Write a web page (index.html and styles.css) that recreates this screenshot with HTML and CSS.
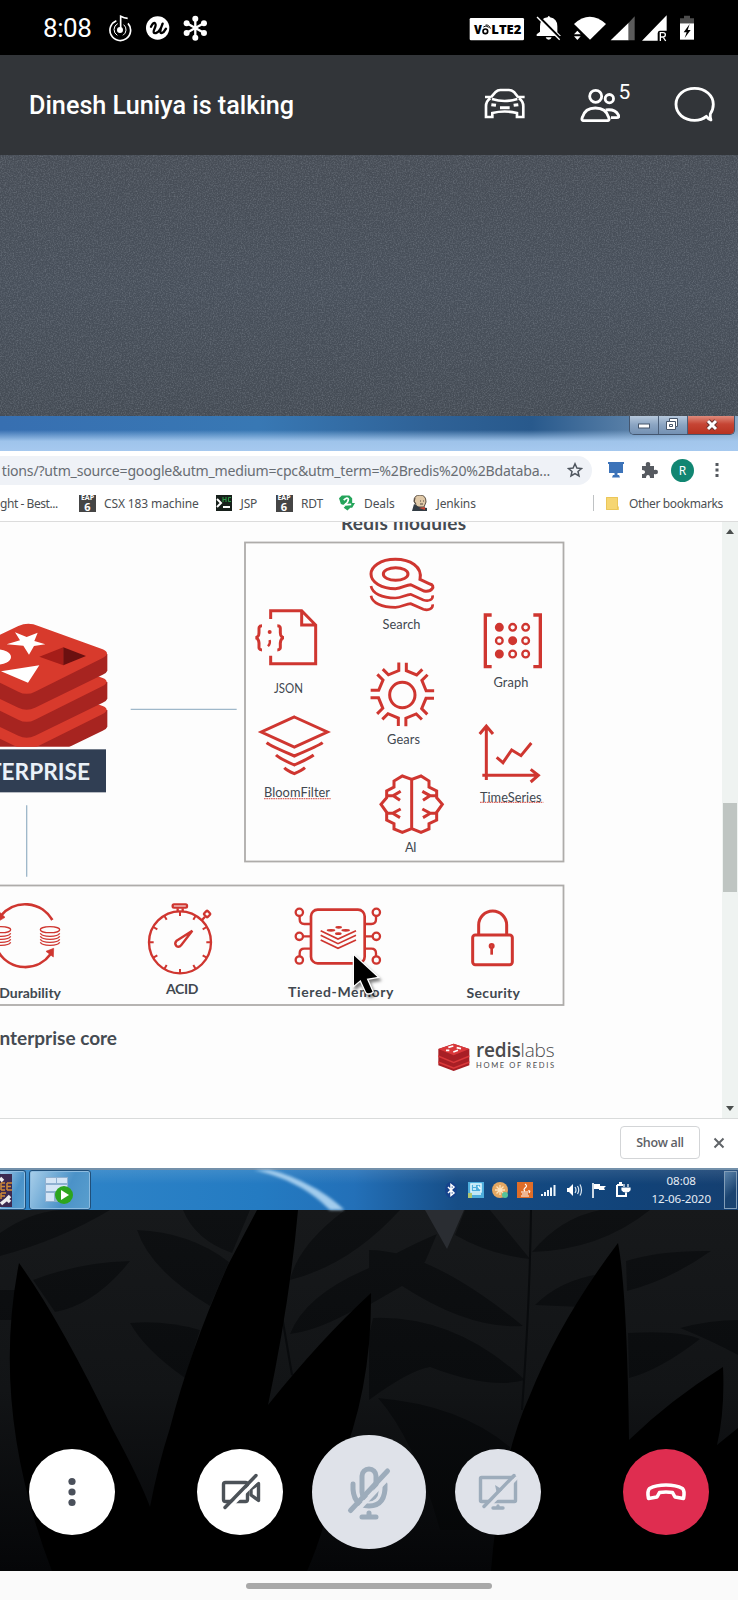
FILE: index.html
```html
<!DOCTYPE html>
<html lang="en">
<head>
<meta charset="utf-8">
<title>Video call</title>
<link rel="stylesheet" href="styles.css">
</head>
<body>
<main class="phone">
  <header class="status">
    <div class="status-left">
      <span class="clock">8:08</span>
      <svg class="status-apps" viewBox="320 40 304 84">
        <g fill="none" stroke="#fff" stroke-width="5">
          <path d="M348 60A31 31 0 1 0 383 68"/>
          <path d="M352 69A20 20 0 0 0 351 104M370 72A20 20 0 0 1 368 104" stroke-width="3"/>
          <path d="M361 88V47Q372 53 382 53"/>
        </g>
        <circle cx="359" cy="88" r="9" fill="#fff"/>
        <circle cx="472" cy="82" r="35" fill="#fff"/>
        <path d="M452 78Q460 62 465 69Q468 73 462 86Q456 99 467 97Q479 94 487 69Q474 100 485 97Q491 95 497 84" fill="none" stroke="#000" stroke-width="7" stroke-linecap="round" stroke-linejoin="round"/>
        <g stroke="#fff" stroke-width="7"><path d="M585 50V114M557 66L613 98M557 98L613 66"/></g>
        <g fill="#fff"><circle cx="585" cy="54" r="9"/><circle cx="585" cy="111" r="9"/><circle cx="559" cy="68" r="9"/><circle cx="611" cy="68" r="9"/><circle cx="559" cy="97" r="9"/><circle cx="611" cy="97" r="9"/></g>
      </svg>
    </div>
    <svg class="status-right" viewBox="300 40 680 84">
      <rect x="302" y="52" width="163" height="67" rx="4" fill="#fff"/>
      <g class="volte"><text x="315" y="99" textLength="24">V</text><text x="367" y="99" textLength="90" lengthAdjust="spacingAndGlyphs">LTE2</text></g>
      <circle cx="349" cy="92" r="7" fill="none" stroke="#000" stroke-width="5"/>
      <path d="M343 79Q351 72 359 80M350 73Q361 72 364 84" fill="none" stroke="#000" stroke-width="3"/>
      <path d="M503 106V101L513 93V77Q514 52 536 50Q539 42 543 50Q565 54 565 77V95L576 106Z" fill="#fff"/>
      <path d="M530 110H548Q546 117 539 117Q532 117 530 110" fill="#fff"/>
      <path d="M508 46L576 115" stroke="#000" stroke-width="7"/><path d="M504 49L572 117" stroke="#fff" stroke-width="4"/>
      <path d="M615 70Q662 27 711 70L663 117Z" fill="#fff"/>
      <path d="M625 90L635 101H615ZM625 118L635 107H615Z" fill="#fff"/>
      <path d="M725 119L779 66V119Z" fill="#fff"/><path d="M779 66L797 47V119H779Z" fill="#5b5b5b"/>
      <path d="M819 120L893 44V90H872Q866 90 866 98V120Z" fill="#fff"/>
      <path d="M874 121V96H882Q889 96 889 102Q889 109 881 109H874M882 109L890 121" fill="none" stroke="#fff" stroke-width="4"/>
      <path d="M933 68V53H945V45H963V53H975V68Z" fill="#4d4d4d"/><path d="M933 68H975V117H933Z" fill="#fff"/>
      <path d="M962 70L944 95H953L947 112L965 88H956Z" fill="#000"/>
    </svg>
  </header>

  <section class="call-bar">
    <h1 class="talker">Dinesh Luniya is talking</h1>
    <svg class="icon-car" viewBox="343 265 124 94" fill="none" stroke="#fff" stroke-width="8">
      <path d="M365 292L378 277Q384 271 392 271H418Q426 271 433 277L445 292M346 292H366M443 292H465M367 298Q405 310 443 298M362 296Q349 304 349 320V352H368V340Q405 331 442 340V352H461V320Q461 304 448 296"/>
      <path d="M365 315L379 317M446 315L432 317M391 324H420" stroke-width="9"/>
    </svg>
    <div class="people">
      <svg class="icon-people" viewBox="630 265 122 104" fill="none" stroke="#fff" stroke-width="8.500">
        <circle cx="677" cy="290" r="18"/><circle cx="718" cy="297" r="12.500"/>
        <path d="M642 363Q633 363 637 353Q645 325 676 325Q708 325 716 353Q720 363 711 363Z"/>
        <path d="M707 331Q735 327 745 346Q749 354 740 354H723"/>
      </svg>
      <span class="people-count">5</span>
    </div>
    <svg class="icon-chat" viewBox="915 258 124 108" fill="none" stroke="#fff" stroke-width="8.500" stroke-linejoin="round">
      <path d="M1012 349Q998 361 977 361C945 361 921 341 921 313S945 265 977 265S1033 286 1033 313Q1033 329 1024 342Q1023 352 1026 360Q1018 357 1012 349Z"/>
    </svg>
  </section>

  <section class="stage-gap"><svg class="grain"><filter id="noise"><feTurbulence type="fractalNoise" baseFrequency=".75" numOctaves="2"/><feColorMatrix values="0 0 0 0 .45  0 0 0 0 .5  0 0 0 0 .56  0 0 0 2 -.8"/></filter><rect width="100%" height="100%" filter="url(#noise)"/></svg></section>

  <section class="share">
    <div class="titlebar">
      <div class="win-buttons">
        <span class="win"><svg viewBox="0 0 28 18"><rect x="8.500" y="8" width="11" height="4" fill="#fff" stroke="#46566b"/></svg></span>
        <span class="win"><svg viewBox="0 0 28 18"><path d="M10.500 2.500H18.500V10.500H16.500V13.500H7.500V5.500H10.500Z" fill="#fff" stroke="#46566b"/><path d="M10.500 8.500H13.500V10.500H10.500ZM10.500 5.500H16.500V10.500" fill="none" stroke="#46566b"/></svg></span>
        <span class="win win-close"><svg viewBox="0 0 48 18"><path d="M20 5L28 13M28 5L20 13" stroke="#673430" stroke-width="5"/><path d="M20 5L28 13M28 5L20 13" stroke="#fff" stroke-width="3"/></svg></span>
      </div>
    </div>
    <div class="toolbar">
      <div class="urlbar"><span class="url">tions/?utm_source=google&amp;utm_medium=cpc&amp;utm_term=%2Bredis%20%2Bdataba...</span>
        <svg class="star" viewBox="0 0 16 16"><path d="M8 1.800L9.900 6.100L14.500 6.500L11 9.500L12 14L8 11.600L4 14L5 9.500L1.500 6.500L6.100 6.100Z" fill="none" stroke="#4e555e" stroke-width="1.500"/></svg>
      </div>
      <svg class="ext" viewBox="0 0 18 18"><path d="M1 1H17V3H16V12H10.500V14H12L13 16.500H5L6 14H7.500V12H2V3H1Z" fill="#3c73b9"/></svg>
      <svg class="ext puzzle" viewBox="0 0 18 18"><path d="M2 5H6Q5 1 8 1Q11 1 10 5H14V9Q18 8 18 11Q18 14 14 13V17H10Q10 14 8 14Q6 14 6 17H2V13Q5 13 5 11Q5 9 2 9Z" fill="#565a60"/></svg>
      <span class="avatar">R</span>
      <svg class="kebab" viewBox="0 0 6 18"><g fill="#54585e"><rect x="1.500" y="2" width="3" height="3"/><rect x="1.500" y="7.500" width="3" height="3"/><rect x="1.500" y="13" width="3" height="3"/></g></svg>
    </div>
    <div class="bookmarks">
      <span class="bm-text bm-first">ght - Best...</span>
      <span class="eap"><b>EAP</b><b class="six">6</b></span><span class="bm-text bm-csx">CSX 183 machine</span>
      <svg class="bm-icon bm-term" viewBox="0 0 16 16"><path d="M0 0H16V16H0Z" fill="#17201b"/><path d="M1 4L5 8L1 12M7 12H14" stroke="#fff" stroke-width="2" fill="none"/><path d="M7 2V7M10 2V7M7 4.500H10M15 2.500H12.500V6.500H15" stroke="#2b9b45" fill="none"/></svg><span class="bm-text bm-jsp">JSP</span>
      <span class="eap"><b>EAP</b><b class="six">6</b></span><span class="bm-text bm-rdt">RDT</span>
      <svg class="bm-icon bm-deal" viewBox="0 0 17 16"><path d="M0 3L3 0H11L14 3V8L17 8L14 13H12L9 16L5 13L7 11L2 9Z" fill="#24a45a"/><path d="M5 5Q9 1 10 4Q10 7 6 10L13 9.500" stroke="#fff" stroke-width="1.800" fill="none"/></svg><span class="bm-text bm-deals">Deals</span>
      <svg class="bm-icon bm-jenk" viewBox="0 0 16 16"><path d="M2 6Q2 0 8 0Q14 0 14 7L12 12H5Z" fill="#e0c9a8" stroke="#5c5044"/><path d="M0 16L2 9L7 12L15 13V16Z" fill="#333c44"/><path d="M7 13L13 12V15Z" fill="#c44433"/><path d="M3 3Q1 7 4 9M8 6H9M11 6H12M8 9H11" stroke="#544b42" fill="none"/></svg><span class="bm-text bm-jenkins">Jenkins</span>
      <span class="bm-rest"><i class="divider"></i><svg class="folder" viewBox="0 0 13 15"><path d="M0 1H12V10L13 11V14H0Z" fill="#f6d672"/><path d="M.5 1.500H11.500V13.500H.5Z" fill="none" stroke="#ebc65a"/></svg><span class="bm-text bm-other">Other bookmarks</span></span>
    </div>

    <div class="page">
      <svg class="slide" viewBox="0 522 722 596">
        <text class="heading" x="341" y="530" textLength="125">Redis modules</text>
        <g fill="none" stroke="#aeacaa" stroke-width="1.800"><rect x="245" y="542.500" width="318.500" height="319"/><rect x="-20" y="885.500" width="583.500" height="119.500"/></g>

        <g transform="translate(240 535) scale(.33333)" fill="none" stroke="#cf3630" stroke-width="9">
          <path d="M540 133C548 95 510 73 466 73C420 73 393 95 393 117C393 142 425 161 466 161C485 161 498 149 512 149L552 168C576 172 588 152 570 147Z"/>
          <ellipse cx="467" cy="117" rx="37" ry="19"/>
          <path d="M393 153C397 175 425 189 466 189C485 189 498 178 512 178L550 195C568 200 579 194 578 181M393 182C397 204 425 217 466 217C485 217 498 206 512 206L550 223C568 228 579 220 578 208" stroke-width="8"/>
          <path d="M92 252V227H185L227 270V386H92V362M185 227V270H227"/>
          <path d="M66 272C51 272 60 288 56 300Q53 308 46 308Q53 308 56 318C60 331 51 345 66 345M112 272C127 272 118 288 122 300Q125 308 132 308Q125 308 122 318C118 331 127 345 112 345"/>
          <circle cx="89" cy="291" r="3" stroke-width="6"/><path d="M89 315Q92 325 84 334" stroke-width="7"/>
          <path d="M755 240H736V395H755M880 240H901V395H880" stroke-width="10"/>
          <g stroke-width="7"><circle cx="778" cy="277" r="10" fill="#cf3630"/><circle cx="818" cy="277" r="10"/><circle cx="857" cy="277" r="10"/><circle cx="778" cy="317" r="10"/><circle cx="818" cy="317" r="10" fill="#cf3630"/><circle cx="857" cy="317" r="10"/><circle cx="778" cy="357" r="10" fill="#cf3630"/><circle cx="818" cy="357" r="10"/><circle cx="857" cy="357" r="10"/></g>
          <circle cx="487" cy="480" r="38"/>
          <path id="tooth" d="M499 383V407L530 420L547 403"/>
          <use href="#tooth" transform="rotate(45 487 478)"/><use href="#tooth" transform="rotate(90 487 478)"/><use href="#tooth" transform="rotate(135 487 478)"/><use href="#tooth" transform="rotate(180 487 478)"/><use href="#tooth" transform="rotate(225 487 478)"/><use href="#tooth" transform="rotate(270 487 478)"/><use href="#tooth" transform="rotate(315 487 478)"/>
          <path d="M163 546L262 591L163 636L64 591Z"/>
          <path d="M80 623Q90 632 163 663Q236 632 248 623M108 660Q118 670 163 690Q208 670 221 660M133 698Q140 706 163 716Q186 706 195 698"/>
          <path d="M739 735V575M719 597L739 573L759 597M727 721H893M872 703L895 721L872 741M770 667L789 683L815 645L843 662L874 624"/>
          <path d="M515 733V883M515 733L487 723L462 738V756L440 768V788L423 808L440 832V855L462 866V882L487 892L515 881L543 892L567 882V866L590 855V832L607 808L590 788V768L567 756V738L543 723Z"/>
          <path d="M440 782H460L482 769M460 782L480 796M440 835H458L482 822M458 835L480 848M590 782H570L547 769M570 782L549 796M590 835H571L547 822M571 835L549 848"/>
          <path d="M72 791H272M720 802H910" stroke="#dc6b66" stroke-width="4" stroke-dasharray="5 2"/>
        </g>
        <g class="labels">
          <text x="382.500" y="629.300" textLength="38">Search</text><text x="274" y="693.300" textLength="29" lengthAdjust="spacingAndGlyphs">JSON</text><text x="493.500" y="687" textLength="35">Graph</text><text x="387" y="743.500" textLength="33">Gears</text><text x="264" y="797" textLength="66">BloomFilter</text><text x="480" y="801.500" textLength="61.500">TimeSeries</text><text x="405" y="852" textLength="11.500">AI</text>
        </g>

        <clipPath id="cube-clip"><rect x="-200" y="0" width="600" height="440"/></clipPath>
        <g transform="translate(0 600) scale(.33333)">
          <g clip-path="url(#cube-clip)">
            <g transform="translate(0 168)"><path d="M-150 162H322V212Q320 219 308 224L105 323Q80 335 55 323L-150 225Z" fill="#a72420"/><path d="M55 78Q85 64 115 78L308 150Q332 160 308 174L105 275Q80 288 55 275L-150 175Z" fill="#d83a2c"/></g>
            <g transform="translate(0 84)"><path d="M-150 162H322V212Q320 219 308 224L105 323Q80 335 55 323L-150 225Z" fill="#a72420"/><path d="M55 78Q85 64 115 78L308 150Q332 160 308 174L105 275Q80 288 55 275L-150 175Z" fill="#d83a2c"/></g>
            <path d="M-150 162H322V212Q320 219 308 224L105 323Q80 335 55 323L-150 225Z" fill="#a72420"/><path d="M55 78Q85 64 115 78L308 148Q334 160 308 174L105 275Q80 288 55 275L-150 175Z" fill="#d83a2c"/>
          </g>
          <path d="M45 97L80 111L113 98L103 123L136 133L102 138L87 164L70 137L20 133L60 121ZM3 214L118 196L84 248Z" fill="#fff"/>
          <ellipse cx="-10" cy="171" rx="43" ry="23" fill="#fff"/>
          <path d="M118 170L190 142V196Z" fill="#a51d19"/><path d="M190 142L258 168L190 196Z" fill="#6b1010"/>
          <rect x="-10" y="448" width="328" height="129" fill="#303e53"/>
          <path d="M392 328H710M80 616V830" stroke="#9fb8ca" stroke-width="4"/>
        </g>
        <text class="enterprise" x="90" y="779.500" text-anchor="end">ENTERPRISE</text>

        <g transform="translate(0 880) scale(.33333)" fill="none" stroke="#cf3630" stroke-width="7">
          <path d="M157 120A94 94 0 0 0 2 108M-4 217A94 94 0 0 0 152 222" stroke-width="8"/>
          <path d="M-3 95L15 112L-5 124ZM138 214L161 205L160 231Z" fill="#cf3630" stroke-width="2"/>
          <g id="coins" stroke-width="4"><ellipse cx="150" cy="149" rx="29" ry="9"/><path d="M121 160Q125 169 150 169T179 160M121 169Q125 178 150 178T179 169M121 178Q125 187 150 187T179 178M121 187Q125 196 150 196T179 187"/></g><use href="#coins" x="-147"/>
          <circle cx="540" cy="187" r="93"/><path d="M540 94V108M540 267V281M447 187H461M619 187H633M493 107L500 119M580 119L587 107M460 141L472 148M608 148L620 141M460 233L472 226M608 226L620 233M493 267L500 255M580 255L587 267" stroke-width="6"/>
          <rect x="518" y="73" width="43" height="10" rx="4"/><path d="M533 85V94M548 85V94M604 122L615 110"/><rect x="614" y="95" width="15" height="15" rx="3" transform="rotate(45 622 102)"/>
          <path d="M577 152L530 182Q522 190 529 198Q537 204 544 195Z"/>
        </g>
        <g transform="translate(280 880) scale(.33333)" fill="none" stroke="#cf3630" stroke-width="8">
          <rect x="93" y="89" width="161" height="161" rx="20"/>
          <g id="pins" stroke-width="7"><circle cx="58" cy="97" r="11"/><circle cx="58" cy="169" r="11"/><circle cx="58" cy="240" r="11"/><path d="M59 108V118Q59 132 73 132H92M69 169H92M59 229V220Q59 206 73 206H92"/></g><use href="#pins" transform="translate(347) scale(-1 1)"/>
          <path d="M122 152L174 177L228 152M122 166L174 191L228 166M122 180L174 205L228 180" stroke-width="5"/><g fill="#cf3630" stroke="none"><ellipse cx="153" cy="151" rx="13" ry="4"/><ellipse cx="176" cy="142" rx="10" ry="4"/><ellipse cx="197" cy="151" rx="13" ry="4"/><ellipse cx="175" cy="161" rx="10" ry="4"/></g>
          <rect x="578" y="165" width="119" height="89" rx="8" stroke-width="9"/><path d="M596 164V135A41 41 0 0 1 680 135V164" stroke-width="9"/><circle cx="635" cy="198" r="5"/><path d="M635 200V224"/>
        </g>
        <g class="labels strong">
          <text x="61" y="997.500" text-anchor="end">Durability</text><text x="166" y="993.500" textLength="32.500">ACID</text><text x="288" y="997" textLength="105.500">Tiered-Memory</text><text x="466.500" y="997.500" textLength="53.500">Security</text>
        </g>
        <text class="heading" x="117" y="1045" text-anchor="end">Enterprise core</text>
        <g transform="translate(280 880) scale(.33333)">
          <path class="cursor" d="M220 222V320L241 303L257 338Q268 347 280 336L263 298L296 292Z" fill="#000" stroke="#fff" stroke-width="4"/>
          <path d="M475 507L521 491L568 507V556L521 573L475 556Z" fill="#a81f25"/>
          <path d="M475 507L521 491L568 507L521 526ZM475 526L521 545L568 526V531L521 550L475 531ZM475 544L521 562L568 544V549L521 567L475 549Z" fill="#d9383a"/>
          <path d="M505 502L520 498M498 511H508M520 516L534 511M530 503L543 506" stroke="#fff" stroke-width="5"/>
        </g>
        <text class="brand" x="476" y="1056.500" textLength="78.500"><tspan class="brand-bold">redis</tspan>labs</text>
        <text class="tagline" x="476" y="1068" textLength="78">HOME OF REDIS</text>
      </svg>
      <div class="scrollbar"><i class="arrow up"></i><i class="thumb"></i><i class="arrow down"></i></div>
    </div>

    <div class="downloads">
      <button class="show-all">Show all</button>
      <svg class="close" viewBox="0 0 12 12"><path d="M1.500 1.500L10.500 10.500M10.500 1.500L1.500 10.500" stroke="#606468" stroke-width="2"/></svg>
    </div>

    <div class="taskbar">
      <span class="task task-first"><svg viewBox="0 0 14 33"><path d="M0 0H12V33H0Z" fill="#3c2a50"/><path d="M0 4L3 7M1 30L7 25L10 28M7 25L10 22" stroke="#eee" stroke-width="3.500" fill="none"/><path d="M1 9V16M1 9H5M1 12.500H5M1 16H5M7 9V16M7 9H12M7 12.500H11M7 16H12M1 19H6M1 19V25M1 22H5" stroke="#cf8a36" stroke-width="1.500"/></svg></span>
      <span class="task task-run"><svg viewBox="0 0 30 30"><path d="M1 2H24V27H1Z" fill="#8fb0d0"/><path d="M2 3H12V8H2ZM13 3H23V8H13ZM2 10H23V16H2ZM2 18H10V26H2Z" fill="#d5e5f6"/><circle cx="20" cy="20" r="9" fill="#2da51e"/><path d="M17 15V25L25 20Z" fill="#fff"/></svg></span>
      <svg class="swoosh" viewBox="0 0 100 40" preserveAspectRatio="none"><path d="M0 0H16C35 3 75 20 95 40H80C55 16 25 5 0 0Z" fill="#b9dcf6"/></svg>
      <div class="tray">
        <svg viewBox="0 0 18 18"><ellipse cx="9" cy="9" rx="6" ry="8" fill="#16438c"/><path d="M6 6L12 12L9 14.500V3.500L12 6L6 12" fill="none" stroke="#fff" stroke-width="1.500"/></svg>
        <svg viewBox="0 0 18 18"><path d="M1 1H17V17H1Z" fill="#4eaddc"/><path d="M4 3H14V11H4ZM6 5H9M6 8H9M11 5L13 8M4 13H14" fill="none" stroke="#e8faff" stroke-width="1.500"/><path d="M1 12H5V17H1Z" fill="#b0c670"/></svg>
        <svg viewBox="0 0 18 18"><circle cx="9" cy="9" r="8" fill="#e3a762"/><path d="M9 4V14M4 9H14M5.500 5.500L12.500 12.500M12.500 5.500L5.500 12.500" stroke="#ffe4bd" stroke-width="1.300"/><circle cx="14" cy="14" r="3" fill="#54c49a"/></svg>
        <svg viewBox="0 0 18 18"><path d="M1 1H17V17H1Z" fill="#df6d28"/><path d="M9 3Q12 5 9 7Q7 9 9 10M5 11H12M6 13H12M5 15H13M12 10Q15 9 13 12" fill="none" stroke="#fff" stroke-width="1.200"/></svg>
        <svg viewBox="0 0 18 18"><path d="M2 15V13M5 15V11M8 15V9M11 15V6.500M14.500 15V4" stroke="#eef5fb" stroke-width="2"/></svg>
        <svg viewBox="0 0 18 18"><path d="M2 7H4L8 3V15L4 11H2Z" fill="#fff"/><path d="M10 6Q12 9 10 12M12.500 5Q15 9 12.500 13M15 3.500Q18 9 15 14.500" fill="none" stroke="#dbe7f1" stroke-width="1.200"/></svg>
        <svg viewBox="0 0 18 18"><path d="M3 2V17" stroke="#fff" stroke-width="1.600"/><path d="M4 3H10V5H16L14 7L15 9H9V8H4Z" fill="#fff"/></svg>
        <svg viewBox="0 0 18 18"><path d="M3 4H9M3 4V15H12V12M5 2H8" fill="none" stroke="#fff" stroke-width="2"/><path d="M8 7H16V9Q15 11 12 11Q9 11 8 9ZM10 3V6M14 3V6M12 11V16" fill="#fff" stroke="#fff" stroke-width="1.200"/></svg>
      </div>
      <div class="tray-clock"><span>08:08</span><span>12-06-2020</span></div>
      <i class="show-desktop"></i>
    </div>
  </section>

  <section class="controls-area">
    <svg class="foliage" viewBox="0 1210 738 361">
      <defs><linearGradient id="night" x1="0" y1="0" x2="0" y2="1"><stop offset="0" stop-color="#17191b"/><stop offset=".5" stop-color="#121416"/><stop offset="1" stop-color="#050608"/></linearGradient>
      <linearGradient id="shade" gradientUnits="userSpaceOnUse" x1="0" y1="1210" x2="0" y2="1571"><stop offset="0" stop-color="#0e1012"/><stop offset=".5" stop-color="#0a0c0e"/><stop offset="1" stop-color="#040506"/></linearGradient></defs>
      <rect y="1210" width="738" height="361" fill="url(#night)"/>
      <g fill="url(#shade)">
        <path d="M0 1233Q30 1212 60 1210H110Q60 1240 0 1256Z"/><path d="M33 1280Q80 1262 130 1261Q95 1305 55 1312Z"/><path d="M0 1290L20 1290V1320H0Z"/>
        <path d="M137 1230Q190 1232 229 1262L210 1306Q150 1270 137 1230Z"/><path d="M183 1210H250L232 1253Q195 1240 183 1210Z"/><path d="M130 1323Q165 1320 200 1330L185 1378Q145 1350 130 1323Z"/>
        <path d="M290 1280Q298 1245 345 1210H400Q350 1265 290 1280Z"/><path d="M290 1334Q305 1295 369 1268Q410 1245 437 1234L425 1262Q340 1328 290 1334Z"/>
        <path d="M369 1250Q430 1250 523 1326Q470 1330 402 1286L369 1305Z"/><path d="M465 1210H490L530 1259Q490 1255 455 1235Z"/>
        <path d="M532 1252Q560 1218 600 1210H650Q600 1250 532 1252Z"/><path d="M373 1318Q455 1315 525 1380Q490 1390 430 1367Q410 1370 369 1400V1335Z"/><path d="M535 1305Q560 1280 600 1274L580 1307Z"/>
        <path d="M626 1261Q660 1250 711 1251Q670 1280 627 1291Z"/><path d="M628 1333Q680 1330 700 1339Q660 1370 629 1378Z"/><path d="M680 1328Q710 1320 738 1320V1355Q710 1340 680 1328Z"/><path d="M378 1398Q460 1405 510 1447L495 1530H440Q415 1440 378 1398Z"/>
      </g>
      <path d="M531 1210Q530 1300 522 1410M281 1310L292 1375" fill="none" stroke="#090b0d" stroke-width="2"/>
      <path d="M425 1210H464L447 1249Z" fill="#2a2d32"/>
      <g fill="#000">
        <path d="M19 1263Q60 1320 113 1430Q140 1480 150 1507Q158 1465 170 1428Q190 1350 228 1265L257 1210H298Q290 1300 268 1405Q320 1340 371 1293Q372 1390 338 1470Q325 1530 307 1571H52Q-10 1410 19 1263Z"/>
        <path d="M618 1243Q627 1290 629 1440Q670 1400 723 1367Q725 1410 717 1445L738 1428V1571H491Q500 1460 530 1395Q560 1320 618 1243Z"/>
      </g>
    </svg>
    <nav class="controls">
      <button class="round"><svg viewBox="0 0 50 50" fill="#4a505b"><circle cx="25" cy="14.500" r="3.600"/><circle cx="25" cy="25" r="3.600"/><circle cx="25" cy="35.500" r="3.600"/></svg></button>
      <div class="media">
        <button class="round"><svg viewBox="0 0 50 50" fill="none" stroke="#4c5258" stroke-width="3.400"><rect x="8.500" y="15.500" width="24" height="19" rx="2"/><path d="M43.500 16.500L36 22V28L43.500 33.500Z" stroke-linejoin="round"/><path d="M44 11L12 43" stroke="#fff"/><path d="M41 8.500L10 40.500" stroke-linecap="round"/></svg></button>
        <button class="round large muted"><svg viewBox="0 0 60 60" fill="none" stroke="#9dacbb" stroke-width="5" stroke-linecap="round"><rect x="23" y="7" width="14" height="30" rx="7"/><path d="M14 22Q13 44 30 44Q47 44 46 22M23 55H37M30 51V54"/><path d="M52 13L15 52" stroke="#dfe2e9" stroke-width="4"/><path d="M48.500 9L11.500 48.500"/></svg></button>
        <button class="round muted"><svg viewBox="0 0 50 50" fill="none" stroke="#9dacbb" stroke-width="3.400" stroke-linecap="round"><rect x="7.500" y="10.500" width="35" height="24" rx="1"/><path d="M20 41H30M25 39V41"/><path d="M22 18L30 23L24 27Z" fill="#9dacbb" stroke="none"/><path d="M43.500 11L12 43" stroke="#dfe2e9"/><path d="M41 8.500L11 39.500"/></svg></button>
      </div>
      <button class="round hangup"><svg viewBox="0 0 50 50" fill="none" stroke="#fff" stroke-width="3.600" stroke-linejoin="round"><path d="M7.500 31.500Q6 24 8.500 21.500Q15 18 25 18T41.500 21.500Q44 24 42.500 31.500L34 30L31.500 25.500Q25 24.500 18.500 25.500L16 30Z"/></svg></button>
    </nav>
  </section>
  <footer class="gesture"><i class="handle"></i></footer>
</main>
</body>
</html>
```
FILE: styles.css
```css
* { box-sizing: border-box; }
body { margin: 0; background: #000; }
svg { display: block; flex: none; }
button { border: 0; padding: 0; }
.phone { width: 738px; height: 1600px; display: flex; flex-direction: column; overflow: hidden; font-family: Roboto, sans-serif; }

.status { height: 55px; background: #000; display: flex; align-items: center; justify-content: space-between; padding: 0 42px 0 43px; color: #fff; }
.status-left { display: flex; align-items: center; gap: 15.500px; }
.clock { font-size: 26px; width: 48px; line-height: 55px; padding-top: 1px; letter-spacing: -.4px; }
.status-apps { width: 101.300px; height: 28px; }
.status-right { width: 226.700px; height: 28px; }
.volte { font: 800 34px "Open Sans", sans-serif; }

.call-bar { height: 100px; background: #323539; display: flex; align-items: center; padding: 0 23px 0 29px; color: #fff; }
.talker { margin: 0 auto 0 0; font-size: 25.200px; font-weight: 500; line-height: 100px; padding-top: 2px; }
.icon-car { width: 41.300px; height: 31.300px; margin-top: -2px; }
.people { display: flex; margin-left: 54px; width: 52px; }
.icon-people { width: 40.700px; height: 34.700px; margin-top: 0; }
.people-count { font-size: 21px; line-height: 22px; margin: -7px 0 0 -2px; }
.icon-chat { width: 41.300px; height: 36px; margin-left: 42px; margin-top: -2px; }

.stage-gap { height: 261px; background: linear-gradient(#474d56, #48505b 50%, #454c55); }
.grain { width: 100%; height: 100%; opacity: .28; }

.share { height: 794px; display: flex; flex-direction: column; background: #fdfdfd; font-family: "Noto Sans", "Open Sans", sans-serif; }
.titlebar { height: 35px; display: flex; justify-content: flex-end; padding-right: 3px; background: linear-gradient(transparent 40%, rgba(164,200,238,.95) 72%, #a6c9ef), linear-gradient(90deg, #376fb1, #3878b4 35%, #2f6297 58%, #28598c 72%, #6287ad 88%, #8ba9c6); }
.win-buttons { display: flex; height: 19px; width: 106px; border: 1px solid #44566f; border-top: 0; border-radius: 0 0 5px 5px; overflow: hidden; }
.win { width: 29px; background: linear-gradient(#b6c8dc, #8aa4c2 50%, #7491b3); border-right: 1px solid #4b5f79; }
.win svg { width: 28px; height: 18px; }
.win-close { width: 48px; border: 0; background: linear-gradient(#df8b7c, #c64534 45%, #b73220); }
.win-close svg { width: 48px; }

.toolbar { height: 38px; display: flex; align-items: center; background: #fff; }
.urlbar { width: 592px; height: 29px; border-radius: 0 15px 15px 0; background: #eff2f7; display: flex; align-items: center; justify-content: flex-end; padding-right: 9px; color: #686d73; }
.url { font-size: 14.100px; letter-spacing: -.22px; white-space: nowrap; }
.star { width: 16px; height: 16px; margin-left: 17px; }
.ext { width: 18px; height: 18px; margin-left: 15px; }
.ext.puzzle { margin-left: 15px; }
.avatar { width: 23px; height: 23px; border-radius: 50%; background: #118672; color: #fff; font-size: 12px; line-height: 23px; text-align: center; margin-left: 13px; }
.kebab { width: 6px; height: 18px; margin-left: 20px; }

.bookmarks { height: 33px; display: flex; align-items: center; border-bottom: 1px solid #dcdcdc; background: #fff; padding-bottom: 4px; color: #4c4f53; }
.bm-text { font-size: 12px; letter-spacing: -.12px; white-space: nowrap; flex: none; }
.bm-first { width: 79px; letter-spacing: -.45px; }
.eap { width: 17px; height: 17px; background: #454545; color: #fff; display: flex; flex-direction: column; align-items: center; flex: none; }
.eap b { font-size: 7px; line-height: 6px; height: 6px; }
.eap .six { font-size: 11px; line-height: 11px; height: 11px; }
.bm-csx { margin-left: 8px; width: 112px; }
.bm-icon { width: 16px; height: 16px; }
.bm-jsp { margin-left: 8.500px; width: 35px; }
.bm-rdt { margin-left: 8.500px; width: 38px; }
.bm-deals { margin-left: 9px; width: 48px; }
.bm-jenkins { margin-left: 8.500px; }
.bm-rest { margin-left: auto; margin-right: 15px; display: flex; align-items: center; }
.bm-other { letter-spacing: -.35px; }
.divider { width: 1px; height: 16px; background: #bfc2c4; }
.folder { width: 13px; height: 15px; margin: 0 10px 0 12px; }

.page { height: 596px; display: flex; background: #fdfdfd; }
.slide { width: 722px; height: 596px; overflow: hidden; }
.slide text { font-family: Lato, sans-serif; }
.slide .heading { font-size: 19px; font-weight: 700; fill: #454b52; }
.labels text { font-size: 12.800px; fill: #414850; }
.labels.strong text { font-size: 14px; font-weight: 700; }
.slide .enterprise { font-size: 22.700px; font-weight: 700; fill: #eaf1f8; }
.slide .brand { font-family: "Open Sans", sans-serif; font-size: 19px; font-weight: 300; fill: #4a4a4c; }
.brand-bold { font-weight: 600; }
.slide .tagline { font-size: 7.600px; fill: #4d4d50; }
.cursor { filter: drop-shadow(5px 9px 5px rgba(0,0,0,.5)); }
.scrollbar { width: 16px; background: #eff3f1; display: flex; flex-direction: column; align-items: center; padding: 7px 0 7px; }
.arrow { border: 4px solid transparent; }
.arrow.up { border-top: 0; border-bottom: 5px solid #4a4e4d; }
.arrow.down { border-bottom: 0; border-top: 5px solid #4a4e4d; margin-top: auto; }
.thumb { width: 14px; height: 89px; background: #bfc5c2; margin-top: 269px; }

.downloads { height: 50px; background: #fff; border-top: 1px solid #d9dbdb; display: flex; justify-content: flex-end; align-items: center; padding: 0 13px 2px 0; }
.show-all { width: 80px; height: 33px; border: 1px solid #d3d5d7; border-radius: 4px; background: #fff; font: 600 12.500px "Open Sans", sans-serif; letter-spacing: -.35px; color: #5d6166; }
.close { width: 12px; height: 12px; margin-left: 13px; }

.taskbar { height: 42px; display: flex; align-items: center; border-top: 2px solid #7390aa; background: linear-gradient(rgba(255,255,255,.1), transparent 35%), linear-gradient(90deg, #3187ca, #247bc2 35%, #2370b8 48%, #164d86 62%, #114379 85%, #153f70); color: #e6edf5; }
.task { height: 40px; border: 1px solid #204f79; border-radius: 3px; display: flex; align-items: center; background: linear-gradient(115deg, #a9cfea, #4b92c8 60%, #5a9fce); box-shadow: inset 0 0 0 1px #8dbce0; }
.task-first { width: 26px; border-left: 0; border-radius: 0 3px 3px 0; }
.task-first svg { width: 14px; height: 33px; }
.task-run { width: 62px; margin-left: 3px; padding-left: 14px; }
.task-run svg { width: 30px; height: 30px; }
.swoosh { width: 95px; height: 40px; margin-left: 163px; filter: blur(1.5px); opacity: .85; }
.tray { display: flex; gap: 6.600px; margin-left: 93px; }
.tray svg { width: 18px; height: 18px; }
.tray-clock { width: 84px; margin-left: 7px; display: flex; flex-direction: column; align-items: center; font-size: 11.600px; letter-spacing: -.1px; line-height: 18px; }
.show-desktop { width: 13px; height: 38px; margin-left: auto; margin-right: 1px; border: 1px solid #819db8; background: linear-gradient(135deg, #5a82a9, #1a4370 60%); }

.controls-area { height: 361px; display: grid; background: #000; }
.foliage { grid-area: 1 / 1; width: 738px; height: 361px; }
.controls { grid-area: 1 / 1; z-index: 1; align-self: end; height: 114px; margin-bottom: 22px; padding: 0 29px; display: flex; align-items: center; justify-content: space-between; }
.media { display: flex; align-items: center; gap: 29px; }
.round { width: 86px; height: 86px; border-radius: 50%; background: #fff; display: flex; align-items: center; justify-content: center; }
.round svg { width: 50px; height: 50px; }
.round.large { width: 114px; height: 114px; }
.round.large svg { width: 60px; height: 60px; }
.round.muted { background: #dfe2e9; }
.round.hangup { background: #df2d50; }

.gesture { height: 29px; background: #fafafa; display: flex; align-items: center; justify-content: center; }
.handle { width: 246px; height: 6px; border-radius: 3px; background: #a8a8a8; }
```
